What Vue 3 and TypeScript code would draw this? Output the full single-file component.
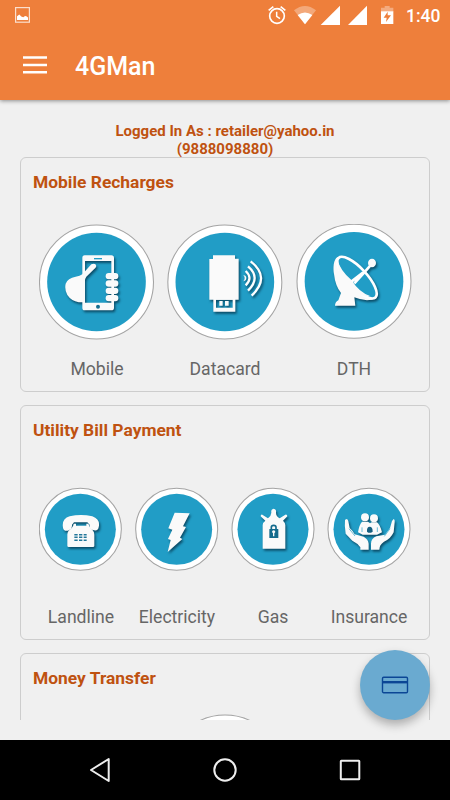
<script setup lang="ts">
interface Service {
  id: string
  label?: string
  box: string
  cx: number
  cy: number
  r: number
}

interface Section {
  title: string
  kind: 'large' | 'small' | 'single'
  items: Service[]
}

const sections: Section[] = [
  {
    title: 'Mobile Recharges',
    kind: 'large',
    items: [
      { id: 'mobile', label: 'Mobile', box: '27 27 348 348', cx: 199.5, cy: 201, r: 171 },
      { id: 'datacard', label: 'Datacard', box: '21 27 348 348', cx: 194.5, cy: 201, r: 171 },
      { id: 'dth', label: 'DTH', box: '18 27 348 348', cx: 192, cy: 199, r: 171 },
    ],
  },
  {
    title: 'Utility Bill Payment',
    kind: 'small',
    items: [
      { id: 'landline', label: 'Landline', box: '72 21 252 252', cx: 196, cy: 148, r: 123 },
      { id: 'electricity', label: 'Electricity', box: '360 21 252 252', cx: 485, cy: 148, r: 123 },
      { id: 'gas', label: 'Gas', box: '18 21 252 252', cx: 144, cy: 148, r: 123 },
      { id: 'insurance', label: 'Insurance', box: '306 21 252 252', cx: 432, cy: 148, r: 123 },
    ],
  },
  {
    title: 'Money Transfer',
    kind: 'single',
    items: [{ id: 'transfer', box: '0 0 348 348', cx: 174, cy: 174, r: 171 }],
  },
]

const innerRadius = (s: Service): number => (s.r > 150 ? 148 : 106.5)
</script>

<template>
  <div class="screen">
    <header class="top">
      <div class="status">
        <svg class="picture" viewBox="0 0 15 16">
          <rect x=".6" y=".6" width="13.8" height="14.6" fill="none" stroke="#fff" stroke-opacity=".75" stroke-width="1.2" />
          <path d="M2 13V9.2L4.3 7.6 6.3 9.6 8.3 10.2 10 9 11.4 9.2 13 10.6v2.4z" fill="#fff" />
        </svg>
        <div class="indicators">
          <svg width="25" height="30" viewBox="126 0 75 90">
            <circle cx="156" cy="48" r="22" fill="none" stroke="#fff" stroke-width="5" />
            <path d="M155 35v14l10 7" fill="none" stroke="#fff" stroke-width="4.5" />
            <path d="M131 31l14-11M181 31l-14-11" stroke="#fff" stroke-width="5" />
          </svg>
          <svg width="27" height="30" viewBox="201 0 81 90">
            <path d="M207 31Q240 5 273 31L240 73z" fill="#fff" opacity=".32" />
            <path d="M218 45Q240 30 262 45L240 73z" fill="#fff" />
          </svg>
          <svg width="27" height="30" viewBox="282 0 81 90"><path d="M345 17v58h-58z" fill="#fff" /></svg>
          <svg width="27" height="30" viewBox="363 0 81 90"><path d="M426 17v58h-57z" fill="#fff" /></svg>
          <svg width="25" height="30" viewBox="444 0 75 90">
            <path d="M479 18h15v5h11v13h-37V23h11z" fill="#fff" opacity=".35" />
            <path d="M468 34h37v38h-37z" fill="#fff" />
            <path d="M488 35l-12 18h9l-2 13 15-20h-10z" fill="#ee7f3b" />
          </svg>
          <span class="time">1:40</span>
        </div>
      </div>
      <div class="toolbar">
        <svg class="menu" width="24" height="18" viewBox="0 0 24 18">
          <path d="M0 1.5h24M0 9h24M0 16.2h24" stroke="#fff" stroke-width="2.6" />
        </svg>
        <h1>4GMan</h1>
      </div>
    </header>

    <main class="content">
      <p class="login">Logged In As : retailer@yahoo.in<br />(9888098880)</p>
      <section v-for="section in sections" :key="section.title" class="card" :class="section.kind">
        <h2>{{ section.title }}</h2>
        <div class="grid">
          <div v-for="s in section.items" :key="s.id" class="service">
            <svg class="badge" :viewBox="s.box">
              <circle :cx="s.cx" :cy="s.cy" :r="s.r" fill="#fff" stroke="#a4a4a4" stroke-width="3.2" />
              <circle :cx="s.cx" :cy="s.cy" :r="innerRadius(s)" fill="#219dc6" />

              <g v-if="s.id === 'mobile'" class="glyph">
                <path fill-rule="evenodd" d="M164 121h80q8 0 8 8v149q0 8-8 8h-80q-7 0-7-8V129q0-8 7-8zM165 138v125h79V138z" />
                <path d="M157 178L184 148Q197 143 199 153Q198 159 192 163L169 185Q163 193 165 205V262H146Q124 258 112 240Q103 224 107 206Q113 189 137 185Q150 184 157 178z" />
                <rect x="227" y="174" width="38" height="19" rx="9" />
                <rect x="227" y="196" width="38" height="19" rx="9" />
                <rect x="227" y="218" width="38" height="19" rx="9" />
                <rect x="227" y="240" width="38" height="19" rx="9" />
                <path d="M192 131h24" stroke="#219dc6" stroke-width="4" />
                <circle cx="204" cy="275" r="6" fill="#176e90" />
              </g>

              <g v-else-if="s.id === 'datacard'" class="glyph">
                <path d="M159 121h66v10h11v123h-88V132h11z" />
                <path fill-rule="evenodd" d="M160 252h66v38h-66zM168 254v24h50v-24z" />
                <path d="M178 258h10v14h-10zM195 258h11v14h-11z" />
                <path d="M250 180q8 9 0 19q9-2 9-10q0-7-9-9z" />
                <path d="M257 168q23 21 0 43M264 154q40 34 0 73M272 139q61 48 3 103" fill="none" stroke="#fff" stroke-width="7" />
              </g>

              <g v-else-if="s.id === 'dth'" class="glyph">
                <path d="M143 126C130 132 129 160 132 177Q136 213 153 234L145 256Q135 262 135 272H196L193 247Q222 259 245 254L262 246L230 180z" />
                <ellipse cx="201" cy="188" rx="81" ry="29" transform="rotate(47 201 188)" fill="#219dc6" stroke="#fff" stroke-width="8" />
                <path d="M143 135Q150 166 185 196Q207 232 240 243Q209 245 180 224Q143 190 143 135z" />
                <path d="M185 199L220 172M193 205L223 172L246 146" fill="none" stroke="#fff" stroke-width="8" />
                <ellipse cx="246" cy="144" rx="12" ry="13" />
              </g>

              <g v-else-if="s.id === 'landline'" class="glyph">
                <path d="M144 143Q139 117 164 109Q198 101 232 109Q257 118 251 142Q250 153 237 151Q222 149 224 134L217 127H177L171 134Q172 149 159 152Q145 154 144 143z" />
                <path d="M176 131h7v6h31v-6h6q3 12 13 20 5 5 5 13v34q0 3-4 3h-73q-4 0-4-4v-34q0-8 6-13 12-9 13-19z" />
                <path d="M178 164h10M192 164h10M206 164h9M178 172h10M192 172h10M206 172h9M178 181h10M192 181h10M206 181h9" stroke="#22779a" stroke-width="4.5" />
              </g>

              <g v-else-if="s.id === 'electricity'" class="glyph">
                <path d="M479 98l45 2-20 39 9 2-18 32 7 4-44 39 9-36-8-3 13-28-12-4z" />
              </g>

              <g v-else-if="s.id === 'gas'" class="glyph">
                <path d="M113 206V136Q113 127 121 122L107 109Q107 103 112 104L129 115Q138 109 139 98Q137 87 146 86Q155 87 153 98Q153 109 164 115L181 104Q187 103 187 109L174 122Q181 128 181 136V206z" />
                <rect x="133" y="147" width="27" height="27" rx="1" fill="#146b8d" />
                <path d="M139 149v-7q0-6 7-6t7 6v7" fill="none" stroke="#146b8d" stroke-width="5" />
                <path d="M146 151q5 0 5 5l-3 4v9h-4v-9l-3-4q0-5 5-5z" />
              </g>

              <g v-else-if="s.id === 'insurance'" class="glyph">
                <circle cx="420" cy="112" r="12" />
                <circle cx="447" cy="115" r="12" />
                <path d="M411 125h18l6 5 5-3h16q9 7 15 30l-15 7H413l-14-7q4-24 12-32z" />
                <path d="M426 155q-1-15 8-15t9 15l-5 3h-8z" fill="#155f80" />
                <path d="M411 142v14M457 142v14" stroke="#219dc6" stroke-width="2" />
                <path d="M363 117Q369 117 370 124L374 144Q382 151 389 163L416 170Q430 178 431 191V209H406V202Q397 189 382 182L362 161Q358 137 360 121zM506 117Q510 118 509 126L506 157Q496 178 477 185Q463 194 463 209H438V191Q438 176 454 169L480 164L495 144L501 123z" />
                <path d="M372 146l18 22M495 146l-17 23" stroke="#219dc6" stroke-width="2" />
              </g>
            </svg>
            <span v-if="s.label" class="label">{{ s.label }}</span>
          </div>
        </div>
      </section>
    </main>

    <button class="fab" aria-label="Card">
      <svg width="28" height="18" viewBox="0 0 28 18">
        <rect x="1.5" y="1.3" width="25" height="15.4" rx="1.2" fill="none" stroke="#0b4695" stroke-width="1.4" />
        <path d="M1.5 6.2h25" stroke="#0b4695" stroke-width="2.4" />
      </svg>
    </button>

    <nav class="nav">
      <svg width="24" height="26" viewBox="0 0 24 26"><path d="M20.7 2v22L3 13z" /></svg>
      <svg width="24" height="26" viewBox="0 0 24 26"><circle cx="12" cy="13" r="10.7" /></svg>
      <svg width="24" height="26" viewBox="0 0 24 26"><rect x="2.8" y="3.8" width="18.5" height="18.5" rx=".5" /></svg>
    </nav>
  </div>
</template>

<style>
body {
  margin: 0;
  overflow: hidden;
}
</style>

<style scoped>
.screen {
  position: relative;
  display: flex;
  flex-direction: column;
  width: 450px;
  height: 800px;
  overflow: hidden;
  background: #f0f0f0;
  font-family: Roboto, sans-serif;
}
.screen svg {
  display: block;
  flex: none;
}
.top {
  z-index: 1;
  flex: none;
  height: 100px;
  background: #ee7f3b;
  box-shadow: 0 1px 4px rgba(0, 0, 0, 0.42);
}
.status {
  display: flex;
  justify-content: space-between;
  height: 30px;
  padding: 0 10px 0 15px;
}
.picture {
  width: 15px;
  height: 16px;
  margin-top: 7px;
}
.indicators {
  display: flex;
}
.time {
  width: 34px;
  margin-left: 8px;
  color: #fff;
  font-size: 17.5px;
  font-weight: 500;
  line-height: 32px;
  white-space: nowrap;
}
.toolbar {
  display: flex;
  align-items: center;
  gap: 28px;
  height: 70px;
  padding-left: 23px;
}
.toolbar h1 {
  margin: 3px 0 0;
  color: #fff;
  font-size: 25px;
  font-weight: 500;
  line-height: 30px;
}
.content {
  flex: none;
  height: 620px;
  overflow: hidden;
  padding: 22px 20px 0;
  box-sizing: border-box;
}
.login {
  height: 35.4px;
  margin: 0;
  color: #bf5210;
  font-size: 15px;
  font-weight: 700;
  line-height: 18px;
  text-align: center;
}
.card {
  height: 235px;
  margin-bottom: 13px;
  padding: 0 12px;
  box-sizing: border-box;
  border: 1px solid #cdcdcd;
  border-radius: 6px;
}
.card h2 {
  margin: 0;
  padding: 13px 0 0;
  color: #bf5210;
  font-size: 17.4px;
  font-weight: 700;
  line-height: 23px;
}
.grid {
  display: grid;
}
.large .grid {
  grid-template-columns: 128px 128px 130px;
  padding-top: 29.6px;
}
.small .grid {
  grid-template-columns: repeat(4, 96px);
  padding-top: 44.6px;
}
.single .grid {
  padding-top: 24px;
}
.service {
  display: flex;
  flex-direction: column;
  align-items: center;
}
.badge {
  width: 116px;
  height: 116px;
}
.small .badge {
  width: 84px;
  height: 84px;
}
.glyph {
  fill: #fafafa;
  filter: drop-shadow(4px 6px 3px rgba(0, 35, 55, 0.65));
}
.label {
  margin-top: 18px;
  color: #666;
  font-size: 17.6px;
  line-height: 22px;
}
.small .label {
  margin-top: 35px;
}
.fab {
  position: absolute;
  left: 360px;
  top: 650px;
  display: flex;
  align-items: center;
  justify-content: center;
  width: 70px;
  height: 70px;
  padding: 0;
  border: 0;
  border-radius: 50%;
  background: #6aaad0;
  box-shadow: 0 5px 10px rgba(0, 0, 0, 0.28);
}
.nav {
  display: flex;
  align-items: center;
  justify-content: center;
  gap: 101px;
  height: 60px;
  margin-top: auto;
  background: #000;
}
.nav svg {
  fill: none;
  stroke: #eee;
  stroke-width: 2;
  stroke-linejoin: round;
}
</style>
